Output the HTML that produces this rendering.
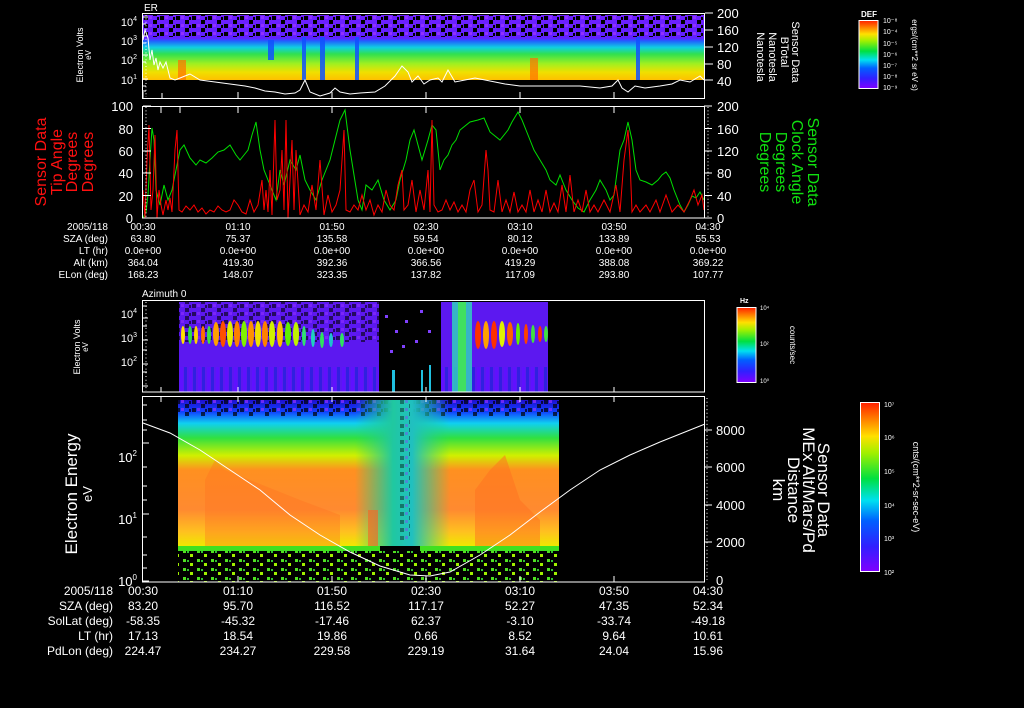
<!DOCTYPE html>
<html><head><meta charset="utf-8"><style>
html,body{margin:0;padding:0;background:#000;}
svg{display:block}
text{font-family:"Liberation Sans",sans-serif;fill:#fff}
</style></head><body>
<svg width="1024" height="708" viewBox="0 0 1024 708" xmlns="http://www.w3.org/2000/svg">
<defs>
<linearGradient id="rb" x1="0" y1="1" x2="0" y2="0">
<stop offset="0" stop-color="#8000ff"/><stop offset=".15" stop-color="#3020ff"/><stop offset=".3" stop-color="#0060ff"/><stop offset=".42" stop-color="#00e0f0"/><stop offset=".55" stop-color="#00e040"/><stop offset=".7" stop-color="#a0f000"/><stop offset=".8" stop-color="#ffe000"/><stop offset=".9" stop-color="#ff8000"/><stop offset="1" stop-color="#ff2000"/>
</linearGradient>
<linearGradient id="p1" x1="0" y1="0" x2="0" y2="1">
<stop offset="0" stop-color="#7020ff"/><stop offset=".36" stop-color="#6020ff"/><stop offset=".4" stop-color="#2060ff"/><stop offset=".5" stop-color="#10d0e0"/><stop offset=".6" stop-color="#30e050"/><stop offset=".75" stop-color="#a0f020"/><stop offset=".88" stop-color="#f0e000"/><stop offset="1" stop-color="#ffc000"/>
</linearGradient>
<linearGradient id="p4" x1="0" y1="0" x2="0" y2="1">
<stop offset="0" stop-color="#2010d0"/><stop offset=".08" stop-color="#1040ff"/><stop offset=".16" stop-color="#10d0f0"/><stop offset=".26" stop-color="#30e040"/><stop offset=".38" stop-color="#d0f000"/><stop offset=".48" stop-color="#ff9020"/><stop offset=".75" stop-color="#ff8a30"/><stop offset=".9" stop-color="#ffc020"/><stop offset="1" stop-color="#f0e800"/>
</linearGradient>
<linearGradient id="mid" x1="0" y1="0" x2="1" y2="0">
<stop offset="0" stop-color="#20d080" stop-opacity="0"/><stop offset=".4" stop-color="#20c8a0" stop-opacity="1"/><stop offset=".6" stop-color="#20c0c0" stop-opacity="1"/><stop offset="1" stop-color="#20d080" stop-opacity="0"/>
</linearGradient>
<pattern id="spk" width="16" height="8" patternUnits="userSpaceOnUse">
<rect x="0" y="0" width="4" height="4" fill="#000"/><rect x="9" y="4" width="4" height="4" fill="#000"/><rect x="5" y="0" width="3" height="3" fill="#9030ff"/><rect x="13" y="1" width="2" height="3" fill="#000"/>
</pattern>
<pattern id="gdot" width="14" height="9" patternUnits="userSpaceOnUse">
<rect x="1" y="1" width="3" height="3" fill="#50e020"/><rect x="8" y="5" width="3" height="3" fill="#a0f000"/><rect x="5" y="2" width="2" height="2" fill="#30c030"/>
</pattern>
<pattern id="vst" width="9" height="20" patternUnits="userSpaceOnUse">
<rect x="0" y="0" width="3" height="20" fill="#6010ff"/><rect x="4" y="0" width="3" height="20" fill="#3020e0"/>
</pattern>
</defs>

<!-- PANEL 1 -->
<text x="144" y="11" font-size="10">ER</text>
<rect x="143" y="15" width="562" height="65" fill="url(#p1)"/>
<rect x="143" y="15" width="562" height="22" fill="url(#spk)"/>
<g fill="#1050ff" opacity=".85">
<rect x="302" y="37" width="4" height="43"/><rect x="320" y="37" width="5" height="43"/><rect x="355" y="37" width="4" height="43"/><rect x="636" y="37" width="4" height="43"/><rect x="268" y="40" width="6" height="20"/>
</g>
<g fill="#ff7000" opacity=".7"><rect x="178" y="60" width="8" height="20"/><rect x="530" y="58" width="8" height="22"/></g>
<polyline fill="none" stroke="#fff" stroke-width="1" points="143,40 145,30 148,38 150,60 152,50 154,65 156,58 158,70 160,62 163,68 166,62 170,78 175,80 180,78 185,76 190,74 200,80 215,82 230,84 245,86 255,88 265,91 275,92 285,94 295,93 300,90 305,80 310,92 320,96 330,93 335,88 340,92 350,94 360,93 375,92 385,86 395,76 402,66 408,72 412,82 418,76 424,84 430,80 438,78 442,82 448,70 455,82 465,80 475,78 485,80 495,82 505,84 520,86 540,86 560,86 580,86 600,88 612,86 618,80 622,88 628,92 635,86 645,88 660,86 672,84 680,80 690,82 700,76 704,80"/>
<rect x="142.5" y="13.5" width="562" height="85" fill="none" stroke="#fff"/>
<g stroke="#fff">
<line x1="142" y1="17" x2="148" y2="17"/><line x1="142" y1="24" x2="146" y2="24"/><line x1="142" y1="36" x2="148" y2="36"/><line x1="142" y1="43" x2="146" y2="43"/><line x1="142" y1="55" x2="148" y2="55"/><line x1="142" y1="62" x2="146" y2="62"/><line x1="142" y1="79" x2="148" y2="79"/><line x1="142" y1="86" x2="146" y2="86"/><line x1="142" y1="91" x2="146" y2="91"/>
<line x1="705" y1="13" x2="713" y2="13"/><line x1="705" y1="30" x2="713" y2="30"/><line x1="705" y1="47" x2="713" y2="47"/><line x1="705" y1="64" x2="713" y2="64"/><line x1="705" y1="80" x2="713" y2="80"/>
</g>
<g font-size="11" text-anchor="end"><text x="137" y="26">10<tspan font-size="7" dy="-5">4</tspan></text><text x="137" y="45">10<tspan font-size="7" dy="-5">3</tspan></text><text x="137" y="64">10<tspan font-size="7" dy="-5">2</tspan></text><text x="137" y="84">10<tspan font-size="7" dy="-5">1</tspan></text></g>
<text transform="translate(83,55) rotate(-90)" font-size="9" text-anchor="middle">Electron Volts</text>
<text transform="translate(91,55) rotate(-90)" font-size="8" text-anchor="middle">eV</text>
<g font-size="13"><text x="717" y="18">200</text><text x="717" y="35">160</text><text x="717" y="52">120</text><text x="717" y="69">80</text><text x="717" y="86">40</text></g>
<g font-size="11" text-anchor="middle">
<text transform="translate(792,52) rotate(90)">Sensor Data</text>
<text transform="translate(781,52) rotate(90)">BTotal</text>
<text transform="translate(769,57) rotate(90)">Nanotesla</text>
<text transform="translate(757,57) rotate(90)">Nanotesla</text>
</g>
<rect x="859" y="20.5" width="19" height="68" fill="url(#rb)" stroke="#fff"/>
<text x="861" y="17" font-size="8" font-weight="bold">DEF</text>
<g font-size="7"><text x="883" y="23">10⁻⁸</text><text x="883" y="34">10⁻⁴</text><text x="883" y="46">10⁻⁵</text><text x="883" y="57">10⁻⁶</text><text x="883" y="68">10⁻⁷</text><text x="883" y="79">10⁻⁸</text><text x="883" y="90">10⁻⁹</text></g>
<text transform="translate(912,55) rotate(90)" font-size="8" text-anchor="middle">ergs/(cm**2 sr eV s)</text>

<!-- PANEL 2 -->
<polyline fill="none" stroke="#00e000" stroke-width="1" points="143,218 146,212 148,195 150,160 152,128 154,140 156,190 160,205 164,185 168,200 172,190 176,170 180,150 184,145 190,158 196,165 200,160 206,163 212,158 218,152 224,150 230,145 236,155 240,160 244,155 248,150 252,135 256,122 260,150 264,170 268,180 272,190 276,200 280,170 284,185 290,160 296,170 300,155 305,180 310,190 316,200 322,180 330,160 335,140 340,120 345,110 350,150 354,175 358,200 362,210 366,185 372,190 378,180 384,200 390,210 396,200 400,180 406,160 410,140 414,130 418,145 422,160 428,140 432,125 436,130 440,170 444,160 448,155 452,145 456,140 460,130 470,122 478,120 484,118 490,132 500,140 508,130 512,122 518,112 522,120 526,130 530,140 534,150 540,160 546,170 550,180 556,185 560,175 566,190 572,200 578,208 584,212 590,200 596,190 600,180 606,190 610,200 614,195 620,150 624,140 628,122 632,140 636,170 640,180 646,182 652,185 658,180 662,175 666,172 670,178 674,190 680,205 684,212 688,205 692,196 696,198 700,192 704,200"/>
<polyline fill="none" stroke="#ff0000" stroke-width="1" points="143,190 145,218 147,160 149,125 151,210 153,190 155,135 157,218 159,190 161,205 163,215 166,200 168,210 170,198 172,212 175,150 177,130 179,210 182,212 186,206 190,210 194,205 198,212 202,208 206,214 210,210 214,212 218,206 222,210 226,212 230,210 234,200 238,205 242,212 246,214 250,200 254,212 258,205 262,180 264,210 266,190 268,212 270,170 272,215 275,120 277,200 280,190 282,150 284,210 286,120 288,218 290,180 292,140 294,210 296,150 300,215 304,205 308,212 312,185 316,210 320,160 324,215 328,195 332,212 336,205 340,190 344,130 346,210 350,212 354,205 358,210 362,195 366,210 370,200 374,215 378,205 382,212 386,190 390,205 394,210 398,185 402,170 404,210 408,205 412,180 416,212 420,190 424,210 428,170 430,212 432,120 434,205 438,212 442,210 446,200 450,210 454,202 458,212 462,205 466,212 470,190 474,180 478,212 482,205 486,150 488,170 490,210 494,212 498,180 502,212 506,200 510,212 514,192 518,212 522,205 526,212 530,190 534,212 538,200 542,212 546,190 550,212 554,203 558,212 562,185 566,212 570,175 574,212 578,200 582,212 586,190 590,212 594,205 598,212 604,200 610,212 616,185 620,212 624,160 628,130 630,160 632,212 636,205 640,212 646,205 650,212 656,200 660,212 666,195 672,212 678,205 684,212 690,200 694,190 698,205 702,195 704,210"/>
<rect x="142.5" y="106.5" width="562" height="111.5" fill="none" stroke="#fff"/>
<g stroke="#fff">
<line x1="143" y1="106" x2="151" y2="106"/><line x1="143" y1="128.5" x2="151" y2="128.5"/><line x1="143" y1="151" x2="151" y2="151"/><line x1="143" y1="173" x2="151" y2="173"/><line x1="143" y1="195.5" x2="151" y2="195.5"/>
<line x1="704" y1="106" x2="712" y2="106"/><line x1="704" y1="128.5" x2="712" y2="128.5"/><line x1="704" y1="151" x2="712" y2="151"/><line x1="704" y1="173" x2="712" y2="173"/><line x1="704" y1="195.5" x2="712" y2="195.5"/><line x1="704" y1="218" x2="712" y2="218"/>
</g>
<g stroke="#fff" stroke-dasharray="1 2.4"><line x1="146" y1="107" x2="146" y2="217"/><line x1="708" y1="107" x2="708" y2="217"/><line x1="146" y1="15" x2="146" y2="97"/></g>
<g stroke="#fff"><line x1="143" y1="98" x2="143" y2="92"/><line x1="162" y1="98" x2="162" y2="93"/><line x1="238" y1="98" x2="238" y2="92"/><line x1="332" y1="98" x2="332" y2="92"/><line x1="426" y1="98" x2="426" y2="92"/><line x1="520" y1="98" x2="520" y2="92"/><line x1="614" y1="98" x2="614" y2="92"/><line x1="161" y1="107" x2="161" y2="113"/><line x1="180" y1="107" x2="180" y2="113"/><line x1="238" y1="107" x2="238" y2="113"/><line x1="332" y1="107" x2="332" y2="113"/><line x1="426" y1="107" x2="426" y2="113"/><line x1="520" y1="107" x2="520" y2="113"/><line x1="614" y1="107" x2="614" y2="113"/></g>
<g font-size="13" text-anchor="end"><text x="133" y="111">100</text><text x="133" y="134">80</text><text x="133" y="156">60</text><text x="133" y="178">40</text><text x="133" y="201">20</text><text x="133" y="223">0</text></g>
<g font-size="13"><text x="717" y="111">200</text><text x="717" y="134">160</text><text x="717" y="156">120</text><text x="717" y="178">80</text><text x="717" y="201">40</text><text x="717" y="223">0</text></g>
<g font-size="16" text-anchor="middle">
<text transform="translate(46,162) rotate(-90)" style="fill:#ff1010">Sensor Data</text>
<text transform="translate(62,162) rotate(-90)" style="fill:#ff1010">Tip Angle</text>
<text transform="translate(77,162) rotate(-90)" style="fill:#ff1010">Degrees</text>
<text transform="translate(93,162) rotate(-90)" style="fill:#ff1010">Degrees</text>
</g>
<g font-size="16" text-anchor="middle">
<text transform="translate(808,162) rotate(90)" style="fill:#10e010">Sensor Data</text>
<text transform="translate(792,162) rotate(90)" style="fill:#10e010">Clock Angle</text>
<text transform="translate(776,162) rotate(90)" style="fill:#10e010">Degrees</text>
<text transform="translate(760,162) rotate(90)" style="fill:#10e010">Degrees</text>
</g>

<!-- labels 1 -->
<g font-size="10" text-anchor="end"><text x="108" y="230">2005/118</text><text x="108" y="242">SZA (deg)</text><text x="108" y="254">LT (hr)</text><text x="108" y="266">Alt (km)</text><text x="108" y="278">ELon (deg)</text></g>
<g font-size="10" text-anchor="middle">
<text x="143" y="230">00:30</text><text x="238" y="230">01:10</text><text x="332" y="230">01:50</text><text x="426" y="230">02:30</text><text x="520" y="230">03:10</text><text x="614" y="230">03:50</text><text x="708" y="230">04:30</text>
<text x="143" y="242">63.80</text><text x="238" y="242">75.37</text><text x="332" y="242">135.58</text><text x="426" y="242">59.54</text><text x="520" y="242">80.12</text><text x="614" y="242">133.89</text><text x="708" y="242">55.53</text>
<text x="143" y="254">0.0e+00</text><text x="238" y="254">0.0e+00</text><text x="332" y="254">0.0e+00</text><text x="426" y="254">0.0e+00</text><text x="520" y="254">0.0e+00</text><text x="614" y="254">0.0e+00</text><text x="708" y="254">0.0e+00</text>
<text x="143" y="266">364.04</text><text x="238" y="266">419.30</text><text x="332" y="266">392.36</text><text x="426" y="266">366.56</text><text x="520" y="266">419.29</text><text x="614" y="266">388.08</text><text x="708" y="266">369.22</text>
<text x="143" y="278">168.23</text><text x="238" y="278">148.07</text><text x="332" y="278">323.35</text><text x="426" y="278">137.82</text><text x="520" y="278">117.09</text><text x="614" y="278">293.80</text><text x="708" y="278">107.77</text>
</g>

<!-- PANEL 3 -->
<text x="142" y="297" font-size="10">Azimuth 0</text>
<rect x="179" y="302" width="200" height="90" fill="#5c18f0"/>
<rect x="179" y="302" width="200" height="40" fill="url(#spk)" opacity=".6"/>
<rect x="179" y="367" width="200" height="25" fill="url(#vst)"/>
<rect x="441" y="302" width="107" height="90" fill="#5c18f0"/>
<rect x="441" y="367" width="107" height="25" fill="url(#vst)"/>
<rect x="452" y="302" width="20" height="90" fill="#30d0c0" opacity=".85"/>
<rect x="458" y="302" width="8" height="90" fill="#40e060"/>
<g fill="#8040ff"><rect x="385" y="315" width="3" height="3"/><rect x="395" y="330" width="3" height="3"/><rect x="405" y="320" width="3" height="3"/><rect x="415" y="340" width="3" height="3"/><rect x="390" y="350" width="3" height="3"/><rect x="420" y="310" width="3" height="3"/><rect x="402" y="345" width="3" height="3"/><rect x="428" y="330" width="3" height="3"/></g>
<g fill="#20c0e0"><rect x="392" y="370" width="3" height="22"/><rect x="421" y="370" width="2" height="22"/><rect x="429" y="365" width="2" height="27"/></g>
<g>
<ellipse cx="183" cy="335" rx="2" ry="9" fill="#ffe000"/><ellipse cx="190" cy="335" rx="2" ry="9" fill="#30e040"/><ellipse cx="196" cy="335" rx="2" ry="9" fill="#ffd000"/><ellipse cx="203" cy="335" rx="2" ry="9" fill="#ff7000"/><ellipse cx="209" cy="335" rx="2" ry="9" fill="#40e040"/><ellipse cx="216" cy="334" rx="3" ry="12" fill="#ffa000"/><ellipse cx="223" cy="334" rx="3" ry="13" fill="#ff5000"/><ellipse cx="230" cy="334" rx="3" ry="13" fill="#e0f000"/><ellipse cx="237" cy="334" rx="3" ry="13" fill="#ff8000"/><ellipse cx="244" cy="334" rx="3" ry="13" fill="#80f000"/><ellipse cx="251" cy="334" rx="3" ry="13" fill="#ff9000"/><ellipse cx="258" cy="334" rx="3" ry="13" fill="#f0e000"/><ellipse cx="265" cy="334" rx="3" ry="13" fill="#ff8000"/><ellipse cx="272" cy="334" rx="3" ry="13" fill="#d0f000"/><ellipse cx="280" cy="334" rx="3" ry="13" fill="#ffc000"/><ellipse cx="288" cy="334" rx="3" ry="12" fill="#60f000"/><ellipse cx="296" cy="334" rx="3" ry="12" fill="#c0f000"/><ellipse cx="304" cy="336" rx="2" ry="10" fill="#30e070"/><ellipse cx="313" cy="338" rx="2" ry="9" fill="#20d0c0"/><ellipse cx="322" cy="340" rx="2" ry="8" fill="#30e060"/><ellipse cx="331" cy="340" rx="2" ry="7" fill="#20c0d0"/><ellipse cx="342" cy="340" rx="2" ry="7" fill="#30e060"/>
<ellipse cx="478" cy="335" rx="3" ry="14" fill="#ff3000"/><ellipse cx="486" cy="335" rx="3" ry="14" fill="#ffa000"/><ellipse cx="494" cy="335" rx="3" ry="14" fill="#ff3000"/><ellipse cx="502" cy="334" rx="3" ry="13" fill="#e0f000"/><ellipse cx="510" cy="334" rx="3" ry="12" fill="#ff6000"/><ellipse cx="518" cy="334" rx="2" ry="11" fill="#60f000"/><ellipse cx="526" cy="334" rx="2" ry="10" fill="#ff4000"/><ellipse cx="533" cy="334" rx="2" ry="9" fill="#40e040"/><ellipse cx="540" cy="334" rx="2" ry="8" fill="#ff3000"/><ellipse cx="546" cy="334" rx="2" ry="8" fill="#40e040"/>
</g>
<rect x="142.5" y="300.5" width="562" height="91.5" fill="none" stroke="#fff"/>
<g stroke="#fff"><line x1="142" y1="318" x2="148" y2="318"/><line x1="142" y1="340" x2="148" y2="340"/><line x1="142" y1="364" x2="148" y2="364"/><line x1="142" y1="386" x2="148" y2="386"/><line x1="143" y1="306" x2="147" y2="306"/><line x1="143" y1="326" x2="147" y2="326"/><line x1="143" y1="350" x2="147" y2="350"/><line x1="143" y1="372" x2="147" y2="372"/></g>
<g font-size="11" text-anchor="end"><text x="137" y="318">10<tspan font-size="7" dy="-5">4</tspan></text><text x="137" y="342">10<tspan font-size="7" dy="-5">3</tspan></text><text x="137" y="366">10<tspan font-size="7" dy="-5">2</tspan></text></g>
<text transform="translate(80,347) rotate(-90)" font-size="9" text-anchor="middle">Electron Volts</text>
<text transform="translate(88,347) rotate(-90)" font-size="8" text-anchor="middle">eV</text>
<rect x="737" y="307.5" width="19" height="75" fill="url(#rb)" stroke="#fff"/>
<text x="740" y="303" font-size="7" font-weight="bold">Hz</text>
<g font-size="6"><text x="760" y="310">10⁴</text><text x="760" y="346">10²</text><text x="760" y="383">10⁰</text></g>
<text transform="translate(790,345) rotate(90)" font-size="8" text-anchor="middle">counts/sec</text>

<!-- PANEL 4 -->
<rect x="178" y="400" width="381" height="146" fill="url(#p4)"/>
<rect x="178" y="400" width="381" height="16" fill="url(#spk)" opacity=".7"/>
<rect x="355" y="400" width="95" height="146" fill="url(#mid)"/>
<rect x="400" y="400" width="10" height="140" fill="url(#spk)" opacity=".4"/>
<polygon points="205,480 215,460 225,470 300,500 340,515 340,546 205,546" fill="#ff7020" opacity=".35"/>
<polygon points="475,490 490,470 505,455 520,500 540,520 540,546 475,546" fill="#ff7020" opacity=".5"/>
<rect x="368" y="510" width="10" height="36" fill="#ff6020" opacity=".6"/>
<rect x="178" y="546" width="381" height="5" fill="#40e020"/>
<rect x="380" y="546" width="40" height="5" fill="#000"/>
<rect x="178" y="551" width="381" height="31" fill="url(#gdot)"/>
<polyline fill="none" stroke="#fff" stroke-width="1" points="143,423 170,433 200,450 230,470 260,490 290,515 320,535 350,552 380,566 410,575 430,576 450,572 480,555 510,535 540,512 570,490 600,470 630,455 660,442 690,430 705,424"/>
<rect x="142.5" y="396.5" width="562" height="185.5" fill="none" stroke="#fff"/>
<g stroke="#fff">
<line x1="142" y1="443" x2="149" y2="443"/><line x1="142" y1="514" x2="149" y2="514"/><line x1="142" y1="581" x2="149" y2="581"/>
<line x1="143" y1="405" x2="147" y2="405"/><line x1="143" y1="420" x2="147" y2="420"/><line x1="143" y1="430" x2="147" y2="430"/><line x1="143" y1="467" x2="147" y2="467"/><line x1="143" y1="486" x2="147" y2="486"/><line x1="143" y1="500" x2="147" y2="500"/><line x1="143" y1="537" x2="147" y2="537"/><line x1="143" y1="555" x2="147" y2="555"/><line x1="143" y1="568" x2="147" y2="568"/>
<line x1="704" y1="430" x2="712" y2="430"/><line x1="704" y1="467" x2="712" y2="467"/><line x1="704" y1="505" x2="712" y2="505"/><line x1="704" y1="542" x2="712" y2="542"/>
</g>
<g stroke="#fff" stroke-dasharray="1 2.7"><line x1="707" y1="398" x2="707" y2="580"/><line x1="146" y1="302" x2="146" y2="391"/></g>
<g stroke="#fff"><line x1="238" y1="582" x2="238" y2="576"/><line x1="332" y1="582" x2="332" y2="576"/><line x1="426" y1="582" x2="426" y2="576"/><line x1="520" y1="582" x2="520" y2="576"/><line x1="614" y1="582" x2="614" y2="576"/><line x1="161" y1="397" x2="161" y2="402"/><line x1="238" y1="397" x2="238" y2="402"/><line x1="332" y1="397" x2="332" y2="402"/><line x1="426" y1="397" x2="426" y2="402"/><line x1="520" y1="397" x2="520" y2="402"/><line x1="614" y1="397" x2="614" y2="402"/><line x1="161" y1="392" x2="161" y2="387"/><line x1="238" y1="392" x2="238" y2="387"/><line x1="332" y1="392" x2="332" y2="387"/><line x1="426" y1="392" x2="426" y2="387"/><line x1="520" y1="392" x2="520" y2="387"/><line x1="614" y1="392" x2="614" y2="387"/></g>
<g font-size="13" text-anchor="end"><text x="137" y="462">10<tspan font-size="8" dy="-6">2</tspan></text><text x="137" y="524">10<tspan font-size="8" dy="-6">1</tspan></text><text x="137" y="586">10<tspan font-size="8" dy="-6">0</tspan></text></g>
<g font-size="13"><text x="716" y="435">8000</text><text x="716" y="472">6000</text><text x="716" y="510">4000</text><text x="716" y="547">2000</text><text x="716" y="585">0</text></g>
<text transform="translate(77,494) rotate(-90)" font-size="17" text-anchor="middle">Electron Energy</text>
<text transform="translate(92,494) rotate(-90)" font-size="13" text-anchor="middle">eV</text>
<g font-size="17" text-anchor="middle">
<text transform="translate(818,490) rotate(90)">Sensor Data</text>
<text transform="translate(803,490) rotate(90)">MEx Alt/Mars/Pd</text>
<text transform="translate(788,490) rotate(90)">Distance</text>
<text transform="translate(773,490) rotate(90)">km</text>
</g>
<rect x="860.5" y="402.5" width="19" height="169" fill="url(#rb)" stroke="#fff"/>
<g font-size="7"><text x="884" y="407">10⁷</text><text x="884" y="440">10⁶</text><text x="884" y="474">10⁵</text><text x="884" y="508">10⁴</text><text x="884" y="541">10³</text><text x="884" y="575">10²</text></g>
<text transform="translate(913,487) rotate(90)" font-size="9" text-anchor="middle">cnts/(cm**2-sr-sec-eV)</text>

<!-- labels 2 -->
<g font-size="12" text-anchor="end"><text x="113" y="595">2005/118</text><text x="113" y="610">SZA (deg)</text><text x="113" y="625">SolLat (deg)</text><text x="113" y="640">LT (hr)</text><text x="113" y="655">PdLon (deg)</text></g>
<g font-size="12" text-anchor="middle">
<text x="143" y="595">00:30</text><text x="238" y="595">01:10</text><text x="332" y="595">01:50</text><text x="426" y="595">02:30</text><text x="520" y="595">03:10</text><text x="614" y="595">03:50</text><text x="708" y="595">04:30</text>
<text x="143" y="610">83.20</text><text x="238" y="610">95.70</text><text x="332" y="610">116.52</text><text x="426" y="610">117.17</text><text x="520" y="610">52.27</text><text x="614" y="610">47.35</text><text x="708" y="610">52.34</text>
<text x="143" y="625">-58.35</text><text x="238" y="625">-45.32</text><text x="332" y="625">-17.46</text><text x="426" y="625">62.37</text><text x="520" y="625">-3.10</text><text x="614" y="625">-33.74</text><text x="708" y="625">-49.18</text>
<text x="143" y="640">17.13</text><text x="238" y="640">18.54</text><text x="332" y="640">19.86</text><text x="426" y="640">0.66</text><text x="520" y="640">8.52</text><text x="614" y="640">9.64</text><text x="708" y="640">10.61</text>
<text x="143" y="655">224.47</text><text x="238" y="655">234.27</text><text x="332" y="655">229.58</text><text x="426" y="655">229.19</text><text x="520" y="655">31.64</text><text x="614" y="655">24.04</text><text x="708" y="655">15.96</text>
</g>
</svg>
</body></html>
